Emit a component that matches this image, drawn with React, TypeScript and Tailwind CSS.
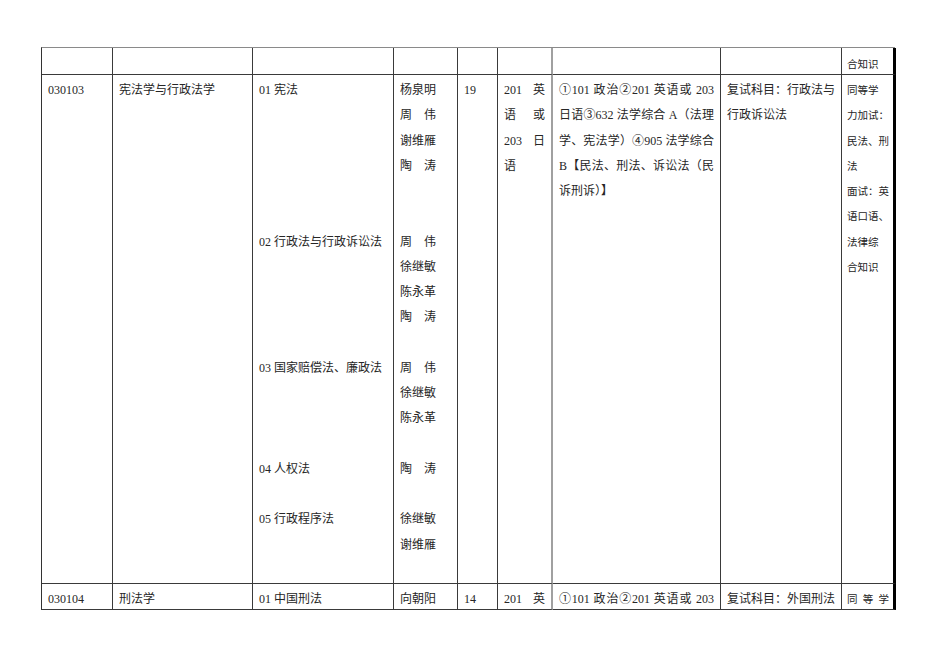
type Line = string | null

const Lines = ({ lines, justify = [], className = '' }: { lines: Line[]; justify?: number[]; className?: string }) => (
  <div className={className}>
    {lines.map((l, i) => (
      <div
        key={i}
        className={`h-[25.25px] leading-[25.25px] whitespace-nowrap ${justify.includes(i) ? 'text-justify [text-align-last:justify]' : ''}`}
      >
        {l ?? '\u00a0'}
      </div>
    ))}
  </div>
)

// two-character names are spread over the width of three characters
const Name = ({ n }: { n: string }) => (
  <span className="inline-block w-[36px] text-justify [text-align-last:justify]">{n}</span>
)

const cell = 'border-r border-b border-[#3a3a3a] px-[6px]'
const col5 = 'border-b border-b-[#3a3a3a] border-r-2 border-r-[#a0a0a0] px-[6px]'
const last = 'border-b border-b-[#3a3a3a] border-r-[3px] border-r-black pl-[5px] pr-[4px] text-[10.5px]'

const names: Line[] = [
  '杨泉明', '周伟', '谢维雁', '陶涛', null, null,
  '周伟', '徐继敏', '陈永革', '陶涛', null,
  '周伟', '徐继敏', '陈永革', null,
  '陶涛', null,
  '徐继敏', '谢维雁', null,
]

const directions: Line[] = [
  '01 宪法', null, null, null, null, null,
  '02 行政法与行政诉讼法', null, null, null, null,
  '03 国家赔偿法、廉政法', null, null, null,
  '04 人权法', null,
  '05 行政程序法',
]

const App = () => {
  return (
    <div className="w-[950px] h-[672px] bg-white text-[12px] text-[#262626] font-['Liberation_Serif','Noto_Sans_CJK_SC',serif] pt-[47px] pl-[41px]">
      <div className="grid grid-cols-[71px_140px_141px_64px_40px_55px_168px_121px_54px] w-[854px] border-t border-t-[#8a8a8a] border-l border-l-[#333]">
        {/* carried-over header row */}
        <div className={`${cell} h-[27px]`} />
        <div className={`${cell} h-[27px]`} />
        <div className={`${cell} h-[27px]`} />
        <div className={`${cell} h-[27px]`} />
        <div className={`${cell} h-[27px]`} />
        <div className={`${col5} h-[27px]`} />
        <div className={`${cell} h-[27px]`} />
        <div className={`${cell} h-[27px]`} />
        <div className={`${last} h-[27px] pt-[10px] leading-[14px]`}>合知识</div>

        {/* 030103 */}
        <div className={`${cell} pt-[3px]`}>
          <Lines lines={['030103']} />
        </div>
        <div className={`${cell} pt-[3px]`}>
          <Lines lines={['宪法学与行政法学']} />
        </div>
        <div className={`${cell} pt-[3px]`}>
          <Lines lines={directions} />
        </div>
        <div className={`${cell} pt-[3px]`}>
          {names.map((n, i) => (
            <div key={i} className="h-[25.25px] leading-[25.25px] whitespace-nowrap">
              {n === null ? '\u00a0' : n.length === 2 ? <Name n={n} /> : n}
            </div>
          ))}
        </div>
        <div className={`${cell} pt-[3px]`}>
          <Lines lines={['19']} />
        </div>
        <div className={`${col5} pt-[3px]`}>
          <Lines lines={['201 英', '语或', '203 日', '语']} justify={[0, 1, 2]} />
        </div>
        <div className={`${cell} pt-[3px]`}>
          <Lines
            lines={[
              '①101 政治②201 英语或 203',
              '日语③632 法学综合 A（法理',
              '学、宪法学）④905 法学综合',
              'B【民法、刑法、诉讼法（民',
              '诉刑诉）】',
            ]}
            justify={[0, 1, 2, 3]}
          />
        </div>
        <div className={`${cell} pt-[3px]`}>
          <Lines lines={['复试科目：行政法与', '行政诉讼法']} justify={[0]} />
        </div>
        <div className={`${last} pt-[3px]`}>
          <Lines lines={['同等学', '力加试：', '民法、刑', '法', '面试：英', '语口语、', '法律综', '合知识']} />
        </div>

        {/* 030104, cut off by the page edge */}
        <div className={`${cell} h-[26px] overflow-hidden pt-[3px]`}>
          <Lines lines={['030104']} />
        </div>
        <div className={`${cell} h-[26px] overflow-hidden pt-[3px]`}>
          <Lines lines={['刑法学']} />
        </div>
        <div className={`${cell} h-[26px] overflow-hidden pt-[3px]`}>
          <Lines lines={['01 中国刑法']} />
        </div>
        <div className={`${cell} h-[26px] overflow-hidden pt-[3px]`}>
          <Lines lines={['向朝阳']} />
        </div>
        <div className={`${cell} h-[26px] overflow-hidden pt-[3px]`}>
          <Lines lines={['14']} />
        </div>
        <div className={`${col5} h-[26px] overflow-hidden pt-[3px]`}>
          <Lines lines={['201 英']} justify={[0]} />
        </div>
        <div className={`${cell} h-[26px] overflow-hidden pt-[3px]`}>
          <Lines lines={['①101 政治②201 英语或 203']} justify={[0]} />
        </div>
        <div className={`${cell} h-[26px] overflow-hidden pt-[3px]`}>
          <Lines lines={['复试科目：外国刑法']} justify={[0]} />
        </div>
        <div className={`${last} h-[26px] overflow-hidden pt-[3px]`}>
          <Lines lines={['同等学']} justify={[0]} />
        </div>
      </div>
    </div>
  )
}

export default App
